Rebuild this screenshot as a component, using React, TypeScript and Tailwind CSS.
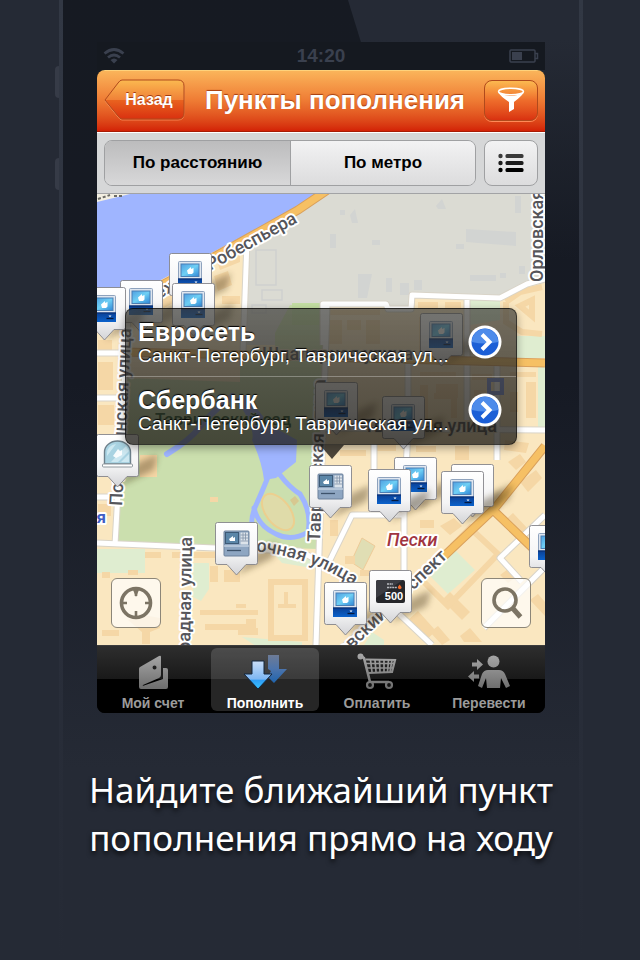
import React, { useState } from "react";

type PinKind = "atm" | "terminal" | "desk" | "card" | "blank";

const PINS: { x: number; y: number; kind: PinKind; label: string }[] = [
  { x: 72, y: 59, kind: "atm", label: "Банкомат" },
  { x: 23, y: 86, kind: "atm", label: "Банкомат" },
  { x: 75, y: 89, kind: "atm", label: "Банкомат" },
  { x: -14, y: 93, kind: "atm", label: "Банкомат" },
  { x: 323, y: 119, kind: "atm", label: "Банкомат" },
  { x: 218, y: 188, kind: "atm", label: "Банкомат" },
  { x: 285, y: 202, kind: "atm", label: "Банкомат" },
  { x: -1, y: 240, kind: "desk", label: "Касса" },
  { x: 297, y: 263, kind: "atm", label: "Банкомат" },
  { x: 354, y: 270, kind: "blank", label: "Пункт" },
  { x: 212, y: 271, kind: "terminal", label: "Терминал" },
  { x: 271, y: 275, kind: "atm", label: "Банкомат" },
  { x: 344, y: 277, kind: "atm", label: "Банкомат" },
  { x: 118, y: 328, kind: "terminal", label: "Терминал" },
  { x: 432, y: 331, kind: "atm", label: "Банкомат" },
  { x: 227, y: 388, kind: "atm", label: "Банкомат" },
  { x: 272, y: 376, kind: "card", label: "Карта 500" },
];

const PLACES = [
  { name: "Евросеть", address: "Санкт-Петербург, Таврическая ул..." },
  { name: "Сбербанк", address: "Санкт-Петербург, Таврическая ул..." },
];

function PinArt({ kind }: { kind: PinKind }) {
  return (
    <svg width="43" height="54" viewBox="0 0 43 54" className="block overflow-visible" aria-hidden="true">
      <path d="M22 53 L58 36 L62 20 L43 28 L30 42Z" fill="#3a2a10" opacity="0.36" filter="url(#pinBlur)" />
      <path
        d="M2.500 .5h38a2 2 0 0 1 2 2v38a2 2 0 0 1-2 2H31L21.500 53 12 42.500H2.500a2 2 0 0 1-2-2v-38a2 2 0 0 1 2-2Z"
        fill="url(#pinFill)"
        stroke="#85858a"
        strokeWidth="0.9"
      />
      {kind === "atm" && (
        <g>
          <rect x="9.500" y="8.500" width="23" height="18" rx="1" fill="#dfe6ef" stroke="#8ea2bd" />
          <rect x="12" y="11" width="18" height="12.500" fill="url(#screenBlue)" stroke="#4b7fb5" />
          <path d="M18 17.500l4-3.500v2l2.500-1v4.500l-1.500 1.500h-4z" fill="#fff" />
          <rect x="9" y="25.500" width="24" height="9.500" fill="url(#atmBase)" />
          <path d="M9 26h24" stroke="#0a2f70" strokeWidth="1" />
          <path d="M23.500 31.500h7" stroke="#03193f" strokeWidth="1.300" />
          <path d="M25.500 28.500h3l-1.500 1.800z" fill="#fff" />
        </g>
      )}
      {kind === "terminal" && (
        <g>
          <rect x="9" y="9" width="25" height="25" rx="1" fill="#8ea6c2" stroke="#6c819b" />
          <rect x="10.500" y="10.500" width="13" height="11" fill="#5b86a8" stroke="#3d5a76" />
          <path d="M14 17l4-3v2l2-1v4h-5z" fill="#fff" />
          <rect x="25.500" y="10.500" width="7.500" height="12" fill="#dce3ea" />
          <path d="M28 10.500v8M30.500 10.500v8M25.500 13h7.500M25.500 16h7.500M25.500 19h7.500" stroke="#8193a8" strokeWidth="0.8" />
          <path d="M9 24h25" stroke="#dce5ef" />
          <path d="M12 28.500h14" stroke="#3e536b" strokeWidth="1.300" />
        </g>
      )}
      {kind === "desk" && (
        <g>
          <path d="M8.500 30V18a13 11 0 0 1 26 0V30Z" fill="#a9d3e2" stroke="#6c7f8a" strokeWidth="1.400" />
          <path d="M11 28V19a10.500 9 0 0 1 9-9L11 22zM15 28L30 12l3 5-11 11zM25 28l8-8v8z" fill="#d6eef5" opacity="0.8" />
          <path d="M17 22l5-7 2 2 2-1v5l-6 3z" fill="#fff" opacity="0.9" />
          <rect x="6.500" y="30" width="30" height="3" rx="1" fill="#fff" stroke="#8f989d" />
        </g>
      )}
      {kind === "card" && (
        <g>
          <rect x="7" y="10" width="29" height="23" rx="2" fill="#26272b" />
          <path d="M7 12a2 2 0 0 1 2-2h25L7 28z" fill="#3b3c42" />
          <path d="M18 14h6M18 17.500h10" stroke="#b9bac0" strokeWidth="1.400" strokeDasharray="2 .6" />
          <path d="M30 19c-2-1-1-3 1-4.500 0 1.500 2 2 1.500 3.500-.4 1-1.500 1.400-2.500 1z" fill="#f26a2a" />
          <text x="25" y="30" fontSize="11" fontWeight="700" textAnchor="middle" fill="#fff" fontFamily="Liberation Sans, sans-serif">
            500
          </text>
        </g>
      )}
    </svg>
  );
}

function Buildings() {
  const beige = [
    "M98 340h14v14h-14zM98 362h15v28h-15zM98 405h16v20h-16zM98 504h13v12h-13z",
    "M148 290l20-6 10 16-14 8-10-6zM216 258l24-10v14l-20 8zM214 276l14-5 4 14-14 6zM222 296h18v8h-18z",
    "M140 455h17v22h-17zM210 497h8v5h-8zM145 552h16v6h-16zM172 552h62v6h-62zM210 566h8v16h-8zM224 570h8v12h-8zM230 562h10v20h-10z",
    "M200 610h58v5h-58zM205 624h50v6h-50zM246 619h10v12h-10zM238 628h20v7h-20z",
    "M102 630h17v6h-17zM128 620l10-6 22 4v10l-10 4v12h-8v-12zM102 572h8v6h-8zM128 570h10v5h-10z",
    "M330 310h50v5h-50zM328 320h14v24h-14zM347 320h14v10h-14zM366 320h14v24h-14zM418 302h20v6h-20zM445 302h16v6h-16z",
    "M420 372h36v5h-36zM420 385h8v35h-8zM436 384h22v14h-22zM472 374h20v6h-20zM474 390h12v24h-12zM510 372h26v5h-26zM526 382h10v36h-10zM510 392h8v20h-8z",
    "M340 450h26v6h-26zM372 444h24v7h-24zM416 446h20v6h-20zM455 446h14v14h-14zM505 440l24 3-3 10-22-3z",
    "M420 520h14v8h-14zM440 526l14-8 8 8-12 9zM330 520h8v16h-8zM360 570h18v6h-18zM345 556h10v8h-10z",
    "M335 620l8-8 8 8-8 8zM408 620l10-9 18 20-10 9zM442 600l8-8 20 20-8 8zM430 632l8-6 12 14-8 5z",
    "M505 520l8-7 16 17-8 7zM530 600l8-6 7 8v14zM500 575l8-6 8 8-8 6zM460 636l10-8 12 14h-18z",
    "M508 462l12-8 6 8-10 8zM520 482l16-12 6 8-14 14z",
  ];
  return (
    <g fill="#f5d7a6">
      {beige.map((d) => (
        <path key={d} d={d} />
      ))}
      <path
        fill="none"
        stroke="#f5d7a6"
        strokeWidth="6"
        d="M271 582h34v56h-34zM506 302l14-10 22-5M506 302v20l16 10 20 2M520 306l12-6v16zM422 360v-40h30v36M434 396h20v22M452 546l18-18 28 26-50 52-30-30"
      />
      <path fill="none" stroke="#f5d7a6" strokeWidth="4" d="M286 592v14M278 606h18M246 606h-10" />
    </g>
  );
}

function MapArt() {
  return (
    <svg
      className="absolute inset-0 h-full w-full"
      viewBox="97 194 448 451"
      preserveAspectRatio="xMidYMid slice"
      role="img"
      aria-label="Карта"
    >
      <defs>
        <linearGradient id="pinFill" x1="0" y1="0" x2="0" y2="1">
          <stop offset="0" stopColor="#ffffff" />
          <stop offset="0.6" stopColor="#f4f4f5" />
          <stop offset="1" stopColor="#d3d4d7" />
        </linearGradient>
        <linearGradient id="screenBlue" x1="0" y1="0" x2="1" y2="1">
          <stop offset="0" stopColor="#4f9fe0" />
          <stop offset="0.5" stopColor="#6fd0f5" />
          <stop offset="1" stopColor="#2f86d6" />
        </linearGradient>
        <linearGradient id="atmBase" x1="0" y1="0" x2="0" y2="1">
          <stop offset="0" stopColor="#0a3f94" />
          <stop offset="1" stopColor="#0b62cc" />
        </linearGradient>
        <filter id="pinBlur" x="-30%" y="-30%" width="160%" height="160%">
          <feGaussianBlur stdDeviation="3" />
        </filter>
        <path id="kirochnaya" d="M224 550 Q308 548 370 598" />
      </defs>

      <rect x="97" y="194" width="448" height="451" fill="#fae7c0" />
      <path d="M97 194h40l-40 10z" fill="#f3efe2" />
      <path d="M97 202L130 194H322L290 211 215 251 97 314Z" fill="#9fb5ff" />
      <path d="M98 199l12-4M114 196h10" stroke="#6b6b66" strokeWidth="2" strokeDasharray="3 2" />
      <path d="M330 194H545V280L527 284 500 298 413 296 411 308H388L386 303 324 304 322 345H244L247 242 300 212Z" fill="#dbdbd3" />
      <g fill="#d2d4d2">
        <path d="M466 229l50 3v14l-50-4zM515 196h6v17h-6zM330 234h6v14h-6zM350 215l5-6 3 14h-6zM372 240h8v5h-8zM340 210h5v5h-5zM436 206l6-7 4 10h-8zM470 275h26v6h-26zM358 274h14l-5 24h-9zM386 278h6v14h-6zM400 283h9v12h-9zM414 280h8v10h-8zM456 244h8v5h-8zM500 273h6v5h-6zM519 266h6v8h-6z" />
      </g>
      <path d="M256 250h20v35h-20zM262 290h20v10h-20zM252 305h14v8h-14z" fill="none" stroke="#cfd1cf" strokeWidth="1.500" />

      {/* parks and lawns */}
      <path d="M122 378 L240 382 240 350 275 350 275 333 290 305 324 305 318 549 118 543Z" fill="#cbdfae" />
      <path d="M292 303h30v22h-30z" fill="#c4dfa3" />
      <path d="M97 549h48v24H97zM193 563h16v26l-8 12-8-4zM470 300h30v20l-30 5zM516 336h29v22h-29zM538 366h7v62h-7zM272 552l40 6v10l-30-5zM242 637l60 5v6l-46-2zM455 550l20 20-27 24-18-18zM372 632l12 8v5h-20z" fill="#dfedd0" />
      <path d="M362 538l13 8-12 24-12-8z" fill="#e0deb4" stroke="#eecb98" />
      <Buildings />

      {/* ponds and canals */}
      <g fill="none" stroke="#9fb5ff" strokeLinecap="round" strokeLinejoin="round">
        <path d="M167 454Q190 440 200 427T232 396" strokeWidth="6" />
        <path d="M270 472Q262 492 256 505T252 532" strokeWidth="5" />
        <path d="M280 475Q290 488 300 494 312 512 308 532 292 542 276 534 258 526 254 508" strokeWidth="5" />
      </g>
      <path d="M236 398Q256 430 252 440 262 462 264 480L276 478 296 462 297 440 270 425 246 395Z" fill="#9fb5ff" />
      <ellipse cx="278" cy="512" rx="12" ry="21" transform="rotate(-38 278 512)" fill="#dfdba9" stroke="#eccf8f" strokeWidth="2" />
      <path d="M290 500l5-4 4 5-5 5z" fill="#d7c890" />

      {/* side streets */}
      <g fill="none" strokeLinejoin="round">
        {["#d9d4c8", "#ffffff"].map((color, i) => (
          <g key={color} stroke={color} strokeWidth={i === 0 ? 7 : 5}>
            <path d="M247 240L243 352" />
            <path d="M323 345V304H386L388 309H411L412 295 500 298 527 284 545 279" />
            <path d="M128 315L115 545M97 353H126M97 398H122M97 497H117" />
            <path d="M97 543L215 548 300 551 350 578" />
            <path d="M327 305L316 645" />
            <path d="M408 350V428L404 515V580L397 612 432 645M467 300V420M374 444V500M497 362V460M320 428L545 430" />
            <path d="M330 560L352 515H404M545 515L500 558 522 582M545 567L484 628" />
            <path d="M340 650L446 553" />
          </g>
        ))}
      </g>

      {/* avenues */}
      <g fill="none" strokeLinejoin="round">
        <path d="M335 185L298 210 212 258 97 320M125 352L240 355 545 363M442 558L495 508 545 446M493 510L545 560" stroke="#d9a05c" strokeWidth="9" />
        <path d="M335 185L298 210 212 258 97 320M125 352L240 355 545 363M442 558L495 508 545 446M493 510L545 560" stroke="#f6c064" strokeWidth="7" />
      </g>
      <rect x="489" y="380" width="13" height="13" fill="none" stroke="#7f97e6" strokeWidth="4" />

      {/* street names */}
      <g
        fontFamily="Roboto, Liberation Sans, Arial, sans-serif"
        fontSize="18"
        fontWeight="500"
        fill="#55555a"
        stroke="#ffffff"
        strokeWidth="4"
        strokeLinejoin="round"
        paintOrder="stroke"
      >
        <text transform="translate(298 222) rotate(-29)" textAnchor="end">набережная Робеспьера</text>
        <text transform="translate(543 282) rotate(-90)">Орловская</text>
        <text transform="translate(122 506) rotate(-87)">Потёмкинская улица</text>
        <text transform="translate(192 537) rotate(-89)" textAnchor="end">Парадная улица</text>
        <text transform="translate(320 542) rotate(-88)">Таврическая улица</text>
        <text><textPath href="#kirochnaya">Кирочная улица</textPath></text>
        <text transform="translate(448 557) rotate(-44)" textAnchor="end">Суворовский проспект</text>
        <g strokeWidth="2" stroke="#e8dcc0">
          <text x="262" y="360">Шпалерная улица</text>
          <text x="497" y="432" textAnchor="end">Тверская улица</text>
        </g>
        <text x="155" y="425" fill="#2d5a35" stroke="#cbdfae" strokeWidth="1" fontSize="17">Таврический сад</text>
        <text x="387" y="546" fill="#a03440" fontStyle="italic">Пески</text>
        <text x="106" y="523" textAnchor="end" fill="#3f5fc4" fontWeight="700" fontSize="17">Чернышевская</text>
      </g>
    </svg>
  );
}

function TabIcon({ name }: { name: string }) {
  return (
    <svg width="44" height="38" viewBox="0 0 44 38" aria-hidden="true">
      <defs>
        <linearGradient id="tabGrey" gradientUnits="userSpaceOnUse" x1="0" y1="2" x2="0" y2="36">
          <stop offset="0" stopColor="#a8a8a8" />
          <stop offset="1" stopColor="#6f6f6f" />
        </linearGradient>
        <linearGradient id="arrowFront" x1="0" y1="0" x2="0" y2="1">
          <stop offset="0" stopColor="#c9def8" />
          <stop offset="0.65" stopColor="#7db6f2" />
          <stop offset="0.68" stopColor="#2f9df5" />
          <stop offset="1" stopColor="#38c3ff" />
        </linearGradient>
        <linearGradient id="arrowBack" x1="0" y1="0" x2="0" y2="1">
          <stop offset="0" stopColor="#6d7b96" />
          <stop offset="0.5" stopColor="#4c74ac" />
          <stop offset="1" stopColor="#1f64ad" />
        </linearGradient>
      </defs>
      {name === "account" && (
        <g fill="url(#tabGrey)">
          <path
            fillRule="evenodd"
            d="M9 15L28 4q2-1 2 1v18q0 2-2 3L12 33q-1 1 1 .5L32 27V16h3q2 0 2 2v17q0 2-2 2H10q-2 0-2-2V17q0-1.500 1-2zM23.500 13.500a2 2 0 1 0 .1 4 2 2 0 0 0-.1-4z"
          />
        </g>
      )}
      {name === "refill" && (
        <g>
          <path d="M25 3h11v14h8L31 31l-6-6 3-6-3-2z" fill="url(#arrowBack)" />
          <path d="M9 9h12v13h8L15 37 1 22h8z" fill="url(#arrowFront)" stroke="#12263f" strokeWidth="1" />
        </g>
      )}
      {name === "pay" && (
        <g stroke="url(#tabGrey)" fill="none">
          <circle cx="5.500" cy="4.500" r="2" fill="#9d9d9d" strokeWidth="2" />
          <path d="M6 4l3 2 6 24H34" strokeWidth="2.600" strokeLinejoin="round" />
          <path d="M10.500 7.500L40 8 37 20 13.500 21" strokeWidth="2.200" />
          <path d="M15.500 8l1.500 12M20 8l1 12M24.500 8l.5 12M29 8v12M33.500 8l-1 12M37 8l-2 12M11 11.500h28M12 16h26" strokeWidth="1.700" />
          <circle cx="15" cy="33" r="3" strokeWidth="2.200" fill="#111" />
          <circle cx="34" cy="33" r="3" strokeWidth="2.200" fill="#111" />
        </g>
      )}
      {name === "transfer" && (
        <g fill="url(#tabGrey)">
          <circle cx="26.500" cy="9.500" r="6" />
          <path d="M21 18h11q4 0 6 4l5 12-4 2-5-10-1 10H20l-1-10-4 10-4-2 4-12q2-4 6-4z" />
          <path d="M5 10.500h5V7l6 5.500-6 5.500v-3.500H5zM12 22.500H7V19l-6 5.500L7 30v-3.500h5z" />
        </g>
      )}
    </svg>
  );
}

const TABS = [
  { id: "account", label: "Мой счет" },
  { id: "refill", label: "Пополнить" },
  { id: "pay", label: "Оплатить" },
  { id: "transfer", label: "Перевести" },
];

export default function App() {
  const [sort, setSort] = useState("distance");
  const [tab, setTab] = useState("refill");

  return (
    <main className="flex min-h-screen justify-center bg-[#252a35] pl-0.5 font-['Liberation_Sans',Arial,sans-serif]">
      <div className="relative flex w-full max-w-[524px]">
        <div className="absolute top-[66px] -left-1 h-8 w-1 rounded-l bg-[#363b47]" />
        <div className="absolute top-[158px] -left-1 h-8 w-1 rounded-l bg-[#363b47]" />
        <div className="w-1 rounded-b-full bg-linear-to-b from-[#323844] via-[#2b303c] to-[#252a35]" />
        <div className="relative flex flex-1 flex-col items-center bg-linear-to-b from-[#161a22] via-[#161a24] via-40% to-[#252a35] to-80%">
          <div className="absolute top-0 right-0 left-[285px] h-[260px] bg-linear-to-b from-[#252a35] from-15% to-[#252a35]/0 [clip-path:polygon(0_0,100%_0,100%_100%,80px_100%)]" />

          <section className="relative mt-[42px] w-full max-w-[448px]">
            <div className="flex h-7 items-center justify-between bg-[#151920] px-1.5 text-[#3a404e]">
              <svg width="22" height="16" viewBox="0 0 22 16" fill="none" stroke="currentColor" aria-hidden="true">
                <path d="M1.500 5.500Q11-2.500 20.500 5.500M5 9.500Q11 4.500 17 9.500" strokeWidth="2.800" />
                <path d="M7.500 12Q11 9 14.500 12L11 15.500Z" fill="currentColor" stroke="none" />
              </svg>
              <span className="pl-2 text-[19px] leading-7 font-bold">14:20</span>
              <svg width="30" height="14" viewBox="0 0 30 14" aria-hidden="true">
                <rect x="1" y="1" width="25" height="12" rx="1" fill="none" stroke="currentColor" strokeWidth="1.500" />
                <rect x="3" y="3" width="10" height="8" fill="currentColor" />
                <path d="M26 4.500h2.500v5H26" fill="none" stroke="currentColor" strokeWidth="1.500" />
              </svg>
            </div>

            <div className="overflow-hidden rounded-lg bg-black">
              <header className="flex h-[62px] items-center justify-between border-t border-b border-t-[#fed27c] border-b-[#a81c05] bg-linear-to-b from-[#fab45a] via-[#ee7a33] via-50% to-[#d32106] px-[7px] pb-0.5">
                <button type="button" className="relative h-[42px] w-[82px] pl-2 text-base font-bold text-white [text-shadow:0_-1px_0_#a33c10]">
                  <svg className="absolute inset-0" width="82" height="42" viewBox="0 0 82 42" fill="none" aria-hidden="true">
                    <defs>
                      <linearGradient id="backFill" x1="0" y1="0" x2="0" y2="1">
                        <stop offset="0" stopColor="#fbb950" />
                        <stop offset="0.5" stopColor="#f08238" />
                        <stop offset="0.52" stopColor="#e9621f" />
                        <stop offset="1" stopColor="#d93110" />
                      </linearGradient>
                    </defs>
                    <path d="M18 2H74q6 0 6 6V35q0 6-6 6H18q-2 0-4-3L1 22 14 5q2-3 4-3z" stroke="#ff9a68" opacity="0.7" />
                    <path d="M18 1H74q6 0 6 6V34q0 6-6 6H18q-2 0-4-3L1 21 14 4q2-3 4-3z" fill="url(#backFill)" stroke="#b04a1c" />
                  </svg>
                  <span className="relative">Назад</span>
                </button>
                <h1 className="text-[26px] leading-8 font-bold whitespace-nowrap text-white [text-shadow:0_-1px_1px_#a33c10]">
                  Пункты пополнения
                </h1>
                <button
                  type="button"
                  aria-label="Фильтр"
                  className="flex h-[41px] w-[54px] items-center justify-center rounded-lg border border-[#b04a1c] bg-linear-to-b from-[#fbb950] via-[#ee6c2b] via-50% to-[#d93110] shadow-[0_1px_0_#ff8a58]"
                >
                  <svg width="28" height="26" viewBox="0 0 28 26" aria-hidden="true">
                    <path d="M1 5q13 8 26 0-1 3-10 10v7l-5 3V15Q3 9 1 5z" fill="#fff" />
                    <ellipse cx="14" cy="4.500" rx="12.500" ry="3.300" fill="none" stroke="#fff" strokeWidth="1.500" />
                  </svg>
                </button>
              </header>

              <div className="flex h-[62px] items-center gap-2 border-t border-b border-t-white border-b-[#a2a3a5] bg-[#d6d7d8] px-[7px]">
                <div className="grid h-[46px] flex-1 grid-cols-2 overflow-hidden rounded-lg border border-[#9fa0a2] text-[17px] font-bold text-black [text-shadow:0_1px_0_#fff]">
                  <button
                    type="button"
                    aria-pressed={sort === "distance"}
                    onClick={() => setSort("distance")}
                    className={sort === "distance" ? "bg-linear-to-b from-[#bcbcbd] to-[#d8d8d9]" : "bg-linear-to-b from-[#f2f2f3] to-[#dcdcdd]"}
                  >
                    По расстоянию
                  </button>
                  <button
                    type="button"
                    aria-pressed={sort === "metro"}
                    onClick={() => setSort("metro")}
                    className={
                      sort === "metro"
                        ? "border-l border-[#9fa0a2] bg-linear-to-b from-[#bcbcbd] to-[#d8d8d9]"
                        : "border-l border-[#9fa0a2] bg-linear-to-b from-[#f2f2f3] to-[#dcdcdd]"
                    }
                  >
                    По метро
                  </button>
                </div>
                <button
                  type="button"
                  aria-label="Список"
                  className="flex h-[46px] w-[54px] items-center justify-center rounded-lg border border-[#9fa0a2] bg-linear-to-b from-[#f2f2f3] to-[#dcdcdd]"
                >
                  <svg width="26" height="20" viewBox="0 0 26 20" aria-hidden="true">
                    <g fill="#3a3a3a"><circle cx="2.500" cy="3" r="2.200" /><rect x="7.500" y="1" width="18" height="4" rx="1.500" /></g>
                    <g fill="#1c1c1c"><circle cx="2.500" cy="10" r="2.200" /><rect x="7.500" y="8" width="18" height="4" rx="1.500" /></g>
                    <g fill="#000"><circle cx="2.500" cy="17" r="2.200" /><rect x="7.500" y="15" width="18" height="4" rx="1.500" /></g>
                  </svg>
                </button>
              </div>

              <div className="relative h-[451px] overflow-hidden">
                <MapArt />
                {PINS.map((pin) => (
                  <button
                    key={`${pin.x}-${pin.y}`}
                    type="button"
                    aria-label={pin.label}
                    className="absolute"
                    style={{ left: pin.x, top: pin.y }}
                  >
                    <PinArt kind={pin.kind} />
                  </button>
                ))}

                <div className="absolute inset-x-7 top-[114px]">
                  <ul className="overflow-hidden rounded-lg border border-black/50 bg-linear-to-b from-[#3a3a36]/70 via-[#2a2824]/75 via-50% to-[#171510]/75 shadow-[0_3px_8px_rgba(0,0,0,0.35)]">
                    {PLACES.map((place) => (
                      <li key={place.name} className="border-b border-white/30 last:border-b-0">
                        <button type="button" className="flex h-[67px] w-full items-center justify-between pr-3.5 pb-0.5 pl-3 text-left text-white">
                          <span className="flex flex-col [text-shadow:0_-1px_1px_#000]">
                            <span className="text-[25px] leading-7 font-bold">{place.name}</span>
                            <span className="text-[19px] leading-5 whitespace-nowrap">{place.address}</span>
                          </span>
                          <svg width="34" height="34" viewBox="0 0 34 34" className="shrink-0" aria-hidden="true">
                            <circle cx="17" cy="17" r="16.500" fill="#fff" />
                            <circle cx="17" cy="17" r="13.500" fill="#1c5fd6" />
                            <path d="M3.800 17a13.200 13.200 0 0 1 26.400 0q-13 3-26.400 0z" fill="#4d8bea" />
                            <path d="M14 9.500l7.500 7.500-7.500 7.500" fill="none" stroke="#fff" strokeWidth="4" />
                          </svg>
                        </button>
                      </li>
                    ))}
                  </ul>
                  <svg className="absolute top-full left-[195px]" width="24" height="14" viewBox="0 0 24 14" aria-hidden="true">
                    <path d="M0 0h24L12 14z" fill="#1c1a16" opacity="0.78" />
                  </svg>
                </div>

                <button
                  type="button"
                  aria-label="Моё местоположение"
                  className="absolute bottom-[17px] left-3.5 flex size-[50px] items-center justify-center rounded-md border border-[#8c8678] bg-white/70"
                >
                  <svg width="34" height="34" viewBox="0 0 34 34" fill="none" stroke="#7c7464" aria-hidden="true">
                    <circle cx="17" cy="17" r="14.500" strokeWidth="3.600" />
                    <path d="M17 1v9M17 25v5M4 17h4M26 17h4" strokeWidth="2.600" />
                    <path d="M14 4h6l-3 7z" fill="#7c7464" stroke="none" />
                  </svg>
                </button>
                <button
                  type="button"
                  aria-label="Поиск"
                  className="absolute right-3.5 bottom-[17px] flex size-[50px] items-center justify-center rounded-md border border-[#8c8678] bg-white/70"
                >
                  <svg width="34" height="34" viewBox="0 0 34 34" fill="none" stroke="#7c7464" aria-hidden="true">
                    <circle cx="16" cy="14" r="11" strokeWidth="3.600" />
                    <path d="M23.500 22l8 9" strokeWidth="5" />
                  </svg>
                </button>
              </div>

              <nav className="grid h-[68px] grid-cols-4 border-t border-[#3c3c3c] bg-linear-to-b from-[#2e2e2e] from-0% via-[#191919] via-50% to-black to-50% text-sm font-bold">
                {TABS.map((item) => (
                  <button
                    key={item.id}
                    type="button"
                    onClick={() => setTab(item.id)}
                    className={
                      tab === item.id
                        ? "m-0.5 flex flex-col items-center justify-between rounded-md bg-white/15 pt-1 text-white"
                        : "m-0.5 flex flex-col items-center justify-between rounded-md pt-1 text-[#9b9b9b]"
                    }
                  >
                    <TabIcon name={item.id} />
                    <span className="leading-4">{item.label}</span>
                  </button>
                ))}
              </nav>
            </div>
          </section>

          <p className="relative mt-[53px] text-center font-['Noto_Sans','Open_Sans',sans-serif] text-[35px] leading-[48px] text-white [text-shadow:0_3px_5px_rgba(0,0,0,0.8)]">
            Найдите ближайший пункт
            <br />
            пополнения прямо на ходу
          </p>
        </div>
        <div className="w-1 rounded-b-full bg-linear-to-b from-[#323844] via-[#2b303c] to-[#252a35]" />
      </div>
    </main>
  );
}
